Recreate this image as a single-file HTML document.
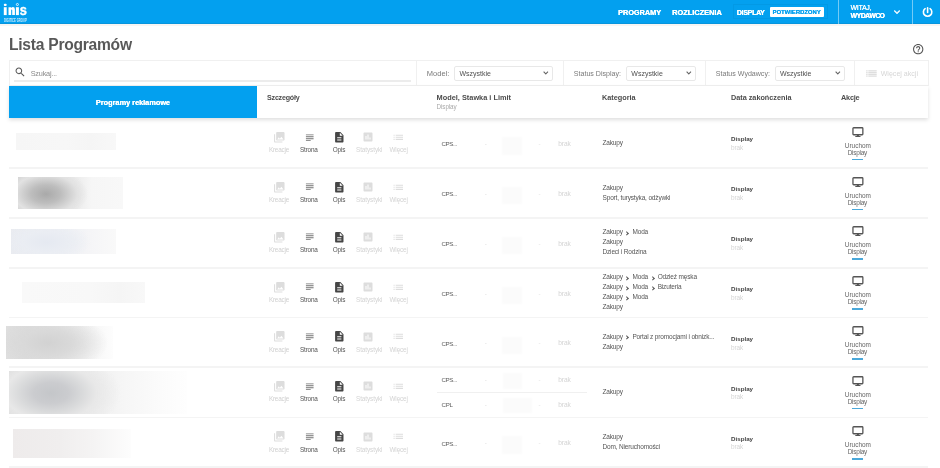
<!DOCTYPE html>
<html><head><meta charset="utf-8"><style>
html,body{margin:0;padding:0;background:#fff;width:940px;height:468px;overflow:hidden;position:relative;font-family:"Liberation Sans", sans-serif}
.t{position:absolute;line-height:1;white-space:nowrap;font-family:"Liberation Sans", sans-serif}
.chev{display:inline-block;width:2.4px;height:2.4px;margin:0 3.6px 0 2.6px;border-right:1.2px solid #555;border-top:1.2px solid #555;transform:rotate(45deg);position:relative;top:0.5px;letter-spacing:0}
</style></head><body><div id="wrap" style="position:absolute;left:0;top:0;width:940px;height:468px;will-change:transform">
<div style="position:absolute;left:0px;top:0px;width:940px;height:24px;background:#03a0ef"></div>
<div style="position:absolute;left:0px;top:23.2px;width:940px;height:1.1px;background:#0794dc"></div>
<div style="position:absolute;left:0px;top:24.3px;width:940px;height:1.6px;background:#f7f5f3"></div>
<svg style="position:absolute;left:0;top:0" width="32" height="24" viewBox="0 0 32 24"><rect x="3.8" y="7.2" width="2.9" height="7.9" fill="#fff"/><rect x="3.8" y="3.8" width="2.9" height="2.2" rx="1" fill="#fff"/><path d="M8.5 15.1V7.2H11.1V8.1Q11.9 7.0 13.0 7.0Q14.9 7.0 14.9 9.4V15.1H12.2V10.3Q12.2 9.5 11.7 9.5Q11.2 9.5 11.2 10.3V15.1Z" fill="#fff"/><rect x="15.9" y="7.2" width="3" height="7.9" fill="#fff"/><circle cx="17.4" cy="4.5" r="1.05" stroke="#fff" stroke-width="0.8" fill="none"/><text x="19.8" y="15.1" font-family="Liberation Sans" font-weight="700" font-size="14.6" fill="#fff" stroke="#fff" stroke-width="0.4" transform="translate(19.8 0) scale(0.88 1) translate(-19.8 0)">s</text></svg>
<div class="t" style="left:3.80px;top:19.11px;font-size:4.6px;font-weight:700;color:rgba(255,255,255,.8);transform:scaleX(0.6);transform-origin:0 0">DIGITICE GROUP</div>
<div class="t" style="left:618.00px;top:8.82px;font-size:7.3px;font-weight:700;color:#fff;text-shadow:0.3px 0 0 #fff">PROGRAMY</div>
<div class="t" style="left:672.00px;top:8.74px;font-size:7.4px;font-weight:700;color:#fff;text-shadow:0.3px 0 0 #fff">ROZLICZENIA</div>
<div style="position:absolute;left:732.7px;top:3.8px;width:95px;height:15px;border:1px solid rgba(0,0,0,.04);box-sizing:border-box"></div>
<div class="t" style="left:736.70px;top:8.97px;font-size:7.0px;font-weight:700;color:#fff;letter-spacing:-0.28px;text-shadow:0.3px 0 0 #fff">DISPLAY</div>
<div style="position:absolute;left:769.7px;top:7.4px;width:54.3px;height:9.5px;background:#fff;border-radius:1px"></div>
<div class="t" style="left:772.50px;top:9.61px;font-size:5.9px;font-weight:700;color:#03a0ef;text-shadow:0.2px 0 0 #03a0ef">POTWIERDZONY</div>
<div style="position:absolute;left:838px;top:0px;width:1px;height:24px;background:rgba(255,255,255,.45)"></div>
<div class="t" style="left:850.60px;top:5.14px;font-size:6.8px;font-weight:400;color:#fff;letter-spacing:-0.2px;text-shadow:0.25px 0 0 #fff">WITAJ,</div>
<div class="t" style="left:850.60px;top:13.44px;font-size:6.8px;font-weight:700;color:#fff;letter-spacing:-0.45px;text-shadow:0.25px 0 0 #fff">WYDAWCO</div>
<svg style="position:absolute;left:891px;top:5.5px;overflow:visible" width="12" height="12" viewBox="0 0 24 24"><path fill="#fff" stroke="#fff" stroke-width="0.8" d="M7.41 8.59L12 13.17l4.59-4.58L18 10l-6 6-6-6 1.41-1.41z"/></svg>
<div style="position:absolute;left:912px;top:0px;width:1px;height:24px;background:rgba(255,255,255,.45)"></div>
<svg style="position:absolute;left:921px;top:6px" width="14" height="14" viewBox="0 0 14 14"><path d="M4.13 2.7A4.2 4.2 0 1 0 9.07 2.7" stroke="#fff" stroke-width="1.6" fill="none" stroke-linecap="round"/><path d="M6.6 1.7V6.4" stroke="#fff" stroke-width="1.6" stroke-linecap="round"/></svg>
<div class="t" style="left:9.00px;top:36.59px;font-size:15.6px;font-weight:700;color:#585858;letter-spacing:-0.25px">Lista Programów</div>
<svg style="position:absolute;left:911.5px;top:43px;overflow:visible" width="12.4" height="12.4" viewBox="0 0 24 24"><path fill="#555" d="M11 18h2v-2h-2v2zm1-16C6.48 2 2 6.48 2 12s4.48 10 10 10 10-4.48 10-10S17.52 2 12 2zm0 18c-4.41 0-8-3.59-8-8s3.590-8 8-8 8 3.590 8 8-3.590 8-8 8zm0-14c-2.210 0-4 1.790-4 4h2c0-1.100.900-2 2-2s2 .900 2 2c0 2-3 1.750-3 5h2c0-2.250 3-2.500 3-5 0-2.210-1.790-4-4-4z"/></svg>
<div style="position:absolute;left:8.5px;top:60px;width:920px;height:26px;background:#fff;border:1px solid #f0f0f0;box-sizing:border-box"></div>
<svg style="position:absolute;left:13.5px;top:65.5px;overflow:visible" width="12.3" height="12.3" viewBox="0 0 24 24"><path fill="#555" d="M15.5 14h-.79l-.28-.27C15.41 12.59 16 11.11 16 9.5 16 5.91 13.09 3 9.5 3S3 5.91 3 9.5 5.91 16 9.5 16c1.610 0 3.090-.590 4.230-1.570l.270.280v.790l5 4.990L20.490 19l-4.990-5zm-6 0C7.010 14 5 11.990 5 9.500S7.010 5 9.500 5 14 7.010 14 9.500 11.990 14 9.500 14z"/></svg>
<div class="t" style="left:30.70px;top:70.32px;font-size:7.3px;font-weight:400;color:#8a8a8a;letter-spacing:-0.2px">Szukaj...</div>
<div style="position:absolute;left:14.2px;top:80.2px;width:397px;height:1.6px;background:#ececec"></div>
<div style="position:absolute;left:416px;top:61px;width:1px;height:24px;background:#f0f0f0"></div>
<div style="position:absolute;left:563px;top:61px;width:1px;height:24px;background:#f0f0f0"></div>
<div style="position:absolute;left:705.2px;top:61px;width:1px;height:24px;background:#f0f0f0"></div>
<div style="position:absolute;left:854.2px;top:61px;width:1px;height:24px;background:#f0f0f0"></div>
<div class="t" style="left:426.80px;top:69.65px;font-size:7.5px;font-weight:400;color:#7a7a7a;">Model:</div>
<div style="position:absolute;left:454.2px;top:65.7px;width:98.80000000000001px;height:15.5px;border:1px solid #e8e8e8;border-radius:2px;box-sizing:border-box;background:#fff"></div>
<div class="t" style="left:459.40px;top:70.07px;font-size:7.0px;font-weight:400;color:#505050;">Wszystkie</div>
<svg style="position:absolute;left:541.0px;top:68.2px;overflow:visible" width="9.6" height="9.6" viewBox="0 0 24 24"><path fill="#555" stroke="#555" stroke-width="0.6" d="M7.41 8.59L12 13.17l4.59-4.58L18 10l-6 6-6-6 1.41-1.41z"/></svg>
<div class="t" style="left:573.80px;top:70.61px;font-size:7.08px;font-weight:400;color:#7a7a7a;">Status Display:</div>
<div style="position:absolute;left:626px;top:65.7px;width:69.60000000000002px;height:15.5px;border:1px solid #e8e8e8;border-radius:2px;box-sizing:border-box;background:#fff"></div>
<div class="t" style="left:631.30px;top:70.07px;font-size:7.0px;font-weight:400;color:#505050;">Wszystkie</div>
<svg style="position:absolute;left:683.6px;top:68.2px;overflow:visible" width="9.6" height="9.6" viewBox="0 0 24 24"><path fill="#555" stroke="#555" stroke-width="0.6" d="M7.41 8.59L12 13.17l4.59-4.58L18 10l-6 6-6-6 1.41-1.41z"/></svg>
<div class="t" style="left:715.80px;top:70.02px;font-size:7.07px;font-weight:400;color:#7a7a7a;">Status Wydawcy:</div>
<div style="position:absolute;left:774.8px;top:65.7px;width:70.0px;height:15.5px;border:1px solid #e8e8e8;border-radius:2px;box-sizing:border-box;background:#fff"></div>
<div class="t" style="left:780.00px;top:70.07px;font-size:7.0px;font-weight:400;color:#505050;">Wszystkie</div>
<svg style="position:absolute;left:832.8px;top:68.2px;overflow:visible" width="9.6" height="9.6" viewBox="0 0 24 24"><path fill="#555" stroke="#555" stroke-width="0.6" d="M7.41 8.59L12 13.17l4.59-4.58L18 10l-6 6-6-6 1.41-1.41z"/></svg>
<svg style="position:absolute;left:865.5px;top:70px" width="11" height="7" viewBox="0 0 11 7"><g fill="#dedede"><rect x="0.2" y="0.2" width="1.4" height="1.3"/><rect x="2.3" y="0.2" width="8.4" height="1.3"/><rect x="0.2" y="1.95" width="1.4" height="1.3"/><rect x="2.3" y="1.95" width="8.4" height="1.3"/><rect x="0.2" y="3.7" width="1.4" height="1.3"/><rect x="2.3" y="3.7" width="8.4" height="1.3"/><rect x="0.2" y="5.45" width="1.4" height="1.3"/><rect x="2.3" y="5.45" width="8.4" height="1.3"/></g></svg>
<div class="t" style="left:880.70px;top:70.02px;font-size:7.07px;font-weight:400;color:#d6d6d6;">Więcej akcji</div>
<div style="position:absolute;left:9px;top:86px;width:919px;height:31.6px;background:#fff;box-shadow:0 1.5px 4px rgba(0,0,0,.13)"></div>
<div style="position:absolute;left:9px;top:86px;width:248px;height:31.6px;background:#03a0ef"></div>
<div class="t" style="left:95.80px;top:98.80px;font-size:7.33px;font-weight:700;color:#fff;text-shadow:0.25px 0 0 #fff">Programy reklamowe</div>
<div class="t" style="left:267.00px;top:94.69px;font-size:7.1px;font-weight:700;color:#4c4c4c;letter-spacing:-0.2px">Szczegóły</div>
<div class="t" style="left:436.60px;top:93.57px;font-size:7.36px;font-weight:700;color:#4c4c4c;">Model, Stawka i Limit</div>
<div class="t" style="left:436.60px;top:104.27px;font-size:6.3px;font-weight:400;color:#aaa;letter-spacing:-0.1px">Display</div>
<div class="t" style="left:602.00px;top:93.82px;font-size:7.3px;font-weight:700;color:#4c4c4c;">Kategoria</div>
<div class="t" style="left:731.00px;top:93.86px;font-size:7.25px;font-weight:700;color:#4c4c4c;">Data zakończenia</div>
<div class="t" style="left:841.00px;top:94.42px;font-size:7.3px;font-weight:700;color:#4c4c4c;letter-spacing:-0.2px">Akcje</div>
<div style="position:absolute;left:8.5px;top:167.1px;width:919.5px;height:1.7px;background:#f4f4f4"></div>
<div style="position:absolute;left:16.4px;top:133.2px;width:99.8px;height:17.1px;background:linear-gradient(90deg,#f6f6f6,#f7f7f7 50%,#f5f5f5 75%,#f8f8f8);filter:blur(0.5px)"></div>
<svg style="position:absolute;left:272.5px;top:130.79999999999998px;overflow:visible" width="12.6" height="12.6" viewBox="0 0 24 24"><path fill="#ddd" d="M22 16V4c0-1.1-.9-2-2-2H8c-1.1 0-2 .9-2 2v12c0 1.1.9 2 2 2h12c1.1 0 2-.9 2-2zm-11-4l2.03 2.71L16 11l4 5H8l3-4zM2 6v14c0 1.1.9 2 2 2h14v-2H4V6H2z"/></svg>
<div class="t" style="left:268.90px;top:147.18px;font-size:6.4px;font-weight:400;color:#d0d0d0;letter-spacing:-0.22px">Kreacje</div>
<svg style="position:absolute;left:303.6px;top:131.49999999999997px;overflow:visible" width="11.5" height="11.5" viewBox="0 0 24 24"><path fill="#707070" d="M14 17H4v2h10v-2zm6-8H4v2h16V9zM4 15h16v-2H4v2zM4 5v2h16V5H4z"/></svg>
<div class="t" style="left:300.00px;top:147.18px;font-size:6.4px;font-weight:400;color:#555;letter-spacing:-0.19px">Strona</div>
<svg style="position:absolute;left:332.5px;top:130.79999999999998px;overflow:visible" width="12.6" height="12.6" viewBox="0 0 24 24"><path fill="#454545" d="M14 2H6c-1.1 0-1.99.9-1.99 2L4 20c0 1.1.89 2 1.99 2H18c1.1 0 2-.9 2-2V8l-6-6zm2 16H8v-2h8v2zm0-4H8v-2h8v2zm-3-5V3.5L18.5 9H13z"/></svg>
<div class="t" style="left:332.70px;top:147.18px;font-size:6.4px;font-weight:400;color:#555;letter-spacing:-0.15px">Opis</div>
<svg style="position:absolute;left:362.3px;top:131.1px;overflow:visible" width="12.0" height="12.0" viewBox="0 0 24 24"><path fill="#ddd" d="M19 3H5c-1.1 0-2 .9-2 2v14c0 1.1.9 2 2 2h14c1.1 0 2-.9 2-2V5c0-1.1-.9-2-2-2zM9 17H7v-7h2v7zm4 0h-2V7h2v10zm4 0h-2v-4h2v4z"/></svg>
<div class="t" style="left:356.00px;top:147.18px;font-size:6.4px;font-weight:400;color:#d4d4d4;letter-spacing:-0.09px">Statystyki</div>
<svg style="position:absolute;left:392px;top:130.79999999999998px;overflow:visible" width="12.6" height="12.6" viewBox="0 0 24 24"><path fill="#ddd" d="M3 13h2v-2H3v2zm0 4h2v-2H3v2zm0-8h2V7H3v2zm4 4h14v-2H7v2zm0 4h14v-2H7v2zM7 7v2h14V7H7z"/></svg>
<div class="t" style="left:389.50px;top:147.18px;font-size:6.4px;font-weight:400;color:#d4d4d4;letter-spacing:-0.16px">Więcej</div>
<div class="t" style="left:441.60px;top:141.30px;font-size:6.2px;font-weight:400;color:#606060;letter-spacing:-0.45px">CPS...</div>
<div class="t" style="left:484.80px;top:141.00px;font-size:6.2px;font-weight:400;color:#ddd;">-</div>
<div style="position:absolute;left:501.5px;top:137.25px;width:20px;height:17.3px;background:#fbfbfb;filter:blur(1px)"></div>
<div class="t" style="left:538.50px;top:141.00px;font-size:6.2px;font-weight:400;color:#ddd;">-</div>
<div class="t" style="left:558.30px;top:140.96px;font-size:6.6px;font-weight:400;color:#d4d4d4;letter-spacing:-0.1px">brak</div>
<div class="t" style="left:602.50px;top:139.70px;font-size:6.5px;font-weight:400;color:#555;letter-spacing:-0.16px">Zakupy</div>
<div class="t" style="left:731.00px;top:136.30px;font-size:6.2px;font-weight:700;color:#444;">Display</div>
<div class="t" style="left:731.00px;top:145.13px;font-size:6.4px;font-weight:400;color:#d4d4d4;letter-spacing:-0.1px">brak</div>
<svg style="position:absolute;left:851.6px;top:126.70px" width="12" height="11" viewBox="0 0 12 11"><rect x="0.95" y="0.75" width="9.9" height="7.0" rx="0.7" stroke="#555" stroke-width="1.3" fill="none"/><path d="M4.9 7.6h2v1.3h1.6v1H3.3v-1h1.6z" fill="#555"/></svg>
<div class="t" style="left:844.80px;top:142.74px;font-size:6.45px;font-weight:400;color:#666;">Uruchom</div>
<div class="t" style="left:847.70px;top:149.74px;font-size:6.45px;font-weight:400;color:#666;letter-spacing:-0.25px">Display</div>
<div style="position:absolute;left:852.3px;top:158.7px;width:10.3px;height:1.5px;background:#4aa8da"></div>
<div style="position:absolute;left:8.5px;top:216.9px;width:919.5px;height:1.7px;background:#f4f4f4"></div>
<div style="position:absolute;left:17.9px;top:176.7px;width:105.1px;height:32.8px;background:radial-gradient(ellipse 42px 26px at 28px 17px,#a9a9a9 0%,#bdbdbd 35%,#e2e2e2 75%,rgba(245,245,245,0) 100%),linear-gradient(90deg,#d0d0d0,#e8e8e8 50%,#f6f6f6 70%,#f8f8f8);filter:blur(0.5px)"></div>
<svg style="position:absolute;left:272.5px;top:180.7px;overflow:visible" width="12.6" height="12.6" viewBox="0 0 24 24"><path fill="#ddd" d="M22 16V4c0-1.1-.9-2-2-2H8c-1.1 0-2 .9-2 2v12c0 1.1.9 2 2 2h12c1.1 0 2-.9 2-2zm-11-4l2.03 2.71L16 11l4 5H8l3-4zM2 6v14c0 1.1.9 2 2 2h14v-2H4V6H2z"/></svg>
<div class="t" style="left:268.90px;top:197.08px;font-size:6.4px;font-weight:400;color:#d0d0d0;letter-spacing:-0.22px">Kreacje</div>
<svg style="position:absolute;left:303.6px;top:181.39999999999998px;overflow:visible" width="11.5" height="11.5" viewBox="0 0 24 24"><path fill="#707070" d="M14 17H4v2h10v-2zm6-8H4v2h16V9zM4 15h16v-2H4v2zM4 5v2h16V5H4z"/></svg>
<div class="t" style="left:300.00px;top:197.08px;font-size:6.4px;font-weight:400;color:#555;letter-spacing:-0.19px">Strona</div>
<svg style="position:absolute;left:332.5px;top:180.7px;overflow:visible" width="12.6" height="12.6" viewBox="0 0 24 24"><path fill="#454545" d="M14 2H6c-1.1 0-1.99.9-1.99 2L4 20c0 1.1.89 2 1.99 2H18c1.1 0 2-.9 2-2V8l-6-6zm2 16H8v-2h8v2zm0-4H8v-2h8v2zm-3-5V3.5L18.5 9H13z"/></svg>
<div class="t" style="left:332.70px;top:197.08px;font-size:6.4px;font-weight:400;color:#555;letter-spacing:-0.15px">Opis</div>
<svg style="position:absolute;left:362.3px;top:181.0px;overflow:visible" width="12.0" height="12.0" viewBox="0 0 24 24"><path fill="#ddd" d="M19 3H5c-1.1 0-2 .9-2 2v14c0 1.1.9 2 2 2h14c1.1 0 2-.9 2-2V5c0-1.1-.9-2-2-2zM9 17H7v-7h2v7zm4 0h-2V7h2v10zm4 0h-2v-4h2v4z"/></svg>
<div class="t" style="left:356.00px;top:197.08px;font-size:6.4px;font-weight:400;color:#d4d4d4;letter-spacing:-0.09px">Statystyki</div>
<svg style="position:absolute;left:392px;top:180.7px;overflow:visible" width="12.6" height="12.6" viewBox="0 0 24 24"><path fill="#ddd" d="M3 13h2v-2H3v2zm0 4h2v-2H3v2zm0-8h2V7H3v2zm4 4h14v-2H7v2zm0 4h14v-2H7v2zM7 7v2h14V7H7z"/></svg>
<div class="t" style="left:389.50px;top:197.08px;font-size:6.4px;font-weight:400;color:#d4d4d4;letter-spacing:-0.16px">Więcej</div>
<div class="t" style="left:441.60px;top:191.15px;font-size:6.2px;font-weight:400;color:#606060;letter-spacing:-0.45px">CPS...</div>
<div class="t" style="left:484.80px;top:190.85px;font-size:6.2px;font-weight:400;color:#ddd;">-</div>
<div style="position:absolute;left:501.5px;top:187.1px;width:20px;height:17.3px;background:#fbfbfb;filter:blur(1px)"></div>
<div class="t" style="left:538.50px;top:190.85px;font-size:6.2px;font-weight:400;color:#ddd;">-</div>
<div class="t" style="left:558.30px;top:190.81px;font-size:6.6px;font-weight:400;color:#d4d4d4;letter-spacing:-0.1px">brak</div>
<div class="t" style="left:602.50px;top:184.55px;font-size:6.5px;font-weight:400;color:#555;letter-spacing:-0.16px">Zakupy</div>
<div class="t" style="left:602.50px;top:194.55px;font-size:6.5px;font-weight:400;color:#555;letter-spacing:-0.16px">Sport, turystyka, odżywki</div>
<div class="t" style="left:731.00px;top:186.15px;font-size:6.2px;font-weight:700;color:#444;">Display</div>
<div class="t" style="left:731.00px;top:194.98px;font-size:6.4px;font-weight:400;color:#d4d4d4;letter-spacing:-0.1px">brak</div>
<svg style="position:absolute;left:851.6px;top:176.60px" width="12" height="11" viewBox="0 0 12 11"><rect x="0.95" y="0.75" width="9.9" height="7.0" rx="0.7" stroke="#555" stroke-width="1.3" fill="none"/><path d="M4.9 7.6h2v1.3h1.6v1H3.3v-1h1.6z" fill="#555"/></svg>
<div class="t" style="left:844.80px;top:192.64px;font-size:6.45px;font-weight:400;color:#666;">Uruchom</div>
<div class="t" style="left:847.70px;top:199.64px;font-size:6.45px;font-weight:400;color:#666;letter-spacing:-0.25px">Display</div>
<div style="position:absolute;left:852.3px;top:208.6px;width:10.3px;height:1.5px;background:#4aa8da"></div>
<div style="position:absolute;left:8.5px;top:266.90000000000003px;width:919.5px;height:1.7px;background:#f4f4f4"></div>
<div style="position:absolute;left:10.7px;top:228.7px;width:105.5px;height:25.3px;background:radial-gradient(ellipse 45px 20px at 35px 13px,#e5e9f1 0%,#eaedf3 50%,rgba(244,245,248,0) 100%),linear-gradient(90deg,#e9ebf0,#eef0f4 50%,#f5f5f7 75%,#f9f9f9);filter:blur(0.5px)"></div>
<svg style="position:absolute;left:272.5px;top:230.5px;overflow:visible" width="12.6" height="12.6" viewBox="0 0 24 24"><path fill="#ddd" d="M22 16V4c0-1.1-.9-2-2-2H8c-1.1 0-2 .9-2 2v12c0 1.1.9 2 2 2h12c1.1 0 2-.9 2-2zm-11-4l2.03 2.71L16 11l4 5H8l3-4zM2 6v14c0 1.1.9 2 2 2h14v-2H4V6H2z"/></svg>
<div class="t" style="left:268.90px;top:246.88px;font-size:6.4px;font-weight:400;color:#d0d0d0;letter-spacing:-0.22px">Kreacje</div>
<svg style="position:absolute;left:303.6px;top:231.2px;overflow:visible" width="11.5" height="11.5" viewBox="0 0 24 24"><path fill="#707070" d="M14 17H4v2h10v-2zm6-8H4v2h16V9zM4 15h16v-2H4v2zM4 5v2h16V5H4z"/></svg>
<div class="t" style="left:300.00px;top:246.88px;font-size:6.4px;font-weight:400;color:#555;letter-spacing:-0.19px">Strona</div>
<svg style="position:absolute;left:332.5px;top:230.5px;overflow:visible" width="12.6" height="12.6" viewBox="0 0 24 24"><path fill="#454545" d="M14 2H6c-1.1 0-1.99.9-1.99 2L4 20c0 1.1.89 2 1.99 2H18c1.1 0 2-.9 2-2V8l-6-6zm2 16H8v-2h8v2zm0-4H8v-2h8v2zm-3-5V3.5L18.5 9H13z"/></svg>
<div class="t" style="left:332.70px;top:246.88px;font-size:6.4px;font-weight:400;color:#555;letter-spacing:-0.15px">Opis</div>
<svg style="position:absolute;left:362.3px;top:230.8px;overflow:visible" width="12.0" height="12.0" viewBox="0 0 24 24"><path fill="#ddd" d="M19 3H5c-1.1 0-2 .9-2 2v14c0 1.1.9 2 2 2h14c1.1 0 2-.9 2-2V5c0-1.1-.9-2-2-2zM9 17H7v-7h2v7zm4 0h-2V7h2v10zm4 0h-2v-4h2v4z"/></svg>
<div class="t" style="left:356.00px;top:246.88px;font-size:6.4px;font-weight:400;color:#d4d4d4;letter-spacing:-0.09px">Statystyki</div>
<svg style="position:absolute;left:392px;top:230.5px;overflow:visible" width="12.6" height="12.6" viewBox="0 0 24 24"><path fill="#ddd" d="M3 13h2v-2H3v2zm0 4h2v-2H3v2zm0-8h2V7H3v2zm4 4h14v-2H7v2zm0 4h14v-2H7v2zM7 7v2h14V7H7z"/></svg>
<div class="t" style="left:389.50px;top:246.88px;font-size:6.4px;font-weight:400;color:#d4d4d4;letter-spacing:-0.16px">Więcej</div>
<div class="t" style="left:441.60px;top:241.05px;font-size:6.2px;font-weight:400;color:#606060;letter-spacing:-0.45px">CPS...</div>
<div class="t" style="left:484.80px;top:240.75px;font-size:6.2px;font-weight:400;color:#ddd;">-</div>
<div style="position:absolute;left:501.5px;top:237.0px;width:20px;height:17.3px;background:#fbfbfb;filter:blur(1px)"></div>
<div class="t" style="left:538.50px;top:240.75px;font-size:6.2px;font-weight:400;color:#ddd;">-</div>
<div class="t" style="left:558.30px;top:240.71px;font-size:6.6px;font-weight:400;color:#d4d4d4;letter-spacing:-0.1px">brak</div>
<div class="t" style="left:602.50px;top:229.45px;font-size:6.5px;font-weight:400;color:#555;letter-spacing:-0.16px">Zakupy<span class="chev"></span>Moda</div>
<div class="t" style="left:602.50px;top:239.45px;font-size:6.5px;font-weight:400;color:#555;letter-spacing:-0.16px">Zakupy</div>
<div class="t" style="left:602.50px;top:249.45px;font-size:6.5px;font-weight:400;color:#555;letter-spacing:-0.16px">Dzieci i Rodzina</div>
<div class="t" style="left:731.00px;top:236.05px;font-size:6.2px;font-weight:700;color:#444;">Display</div>
<div class="t" style="left:731.00px;top:244.88px;font-size:6.4px;font-weight:400;color:#d4d4d4;letter-spacing:-0.1px">brak</div>
<svg style="position:absolute;left:851.6px;top:226.40px" width="12" height="11" viewBox="0 0 12 11"><rect x="0.95" y="0.75" width="9.9" height="7.0" rx="0.7" stroke="#555" stroke-width="1.3" fill="none"/><path d="M4.9 7.6h2v1.3h1.6v1H3.3v-1h1.6z" fill="#555"/></svg>
<div class="t" style="left:844.80px;top:242.44px;font-size:6.45px;font-weight:400;color:#666;">Uruchom</div>
<div class="t" style="left:847.70px;top:249.44px;font-size:6.45px;font-weight:400;color:#666;letter-spacing:-0.25px">Display</div>
<div style="position:absolute;left:852.3px;top:258.40000000000003px;width:10.3px;height:1.5px;background:#4aa8da"></div>
<div style="position:absolute;left:8.5px;top:316.8px;width:919.5px;height:1.7px;background:#f4f4f4"></div>
<div style="position:absolute;left:22.1px;top:282.2px;width:123.4px;height:20.4px;background:linear-gradient(90deg,#f9f9f9,#f8f8f8 55%,#f5f5f5 80%,#f8f8f8);filter:blur(0.5px)"></div>
<svg style="position:absolute;left:272.5px;top:280.5px;overflow:visible" width="12.6" height="12.6" viewBox="0 0 24 24"><path fill="#ddd" d="M22 16V4c0-1.1-.9-2-2-2H8c-1.1 0-2 .9-2 2v12c0 1.1.9 2 2 2h12c1.1 0 2-.9 2-2zm-11-4l2.03 2.71L16 11l4 5H8l3-4zM2 6v14c0 1.1.9 2 2 2h14v-2H4V6H2z"/></svg>
<div class="t" style="left:268.90px;top:296.88px;font-size:6.4px;font-weight:400;color:#d0d0d0;letter-spacing:-0.22px">Kreacje</div>
<svg style="position:absolute;left:303.6px;top:281.2px;overflow:visible" width="11.5" height="11.5" viewBox="0 0 24 24"><path fill="#707070" d="M14 17H4v2h10v-2zm6-8H4v2h16V9zM4 15h16v-2H4v2zM4 5v2h16V5H4z"/></svg>
<div class="t" style="left:300.00px;top:296.88px;font-size:6.4px;font-weight:400;color:#555;letter-spacing:-0.19px">Strona</div>
<svg style="position:absolute;left:332.5px;top:280.5px;overflow:visible" width="12.6" height="12.6" viewBox="0 0 24 24"><path fill="#454545" d="M14 2H6c-1.1 0-1.99.9-1.99 2L4 20c0 1.1.89 2 1.99 2H18c1.1 0 2-.9 2-2V8l-6-6zm2 16H8v-2h8v2zm0-4H8v-2h8v2zm-3-5V3.5L18.5 9H13z"/></svg>
<div class="t" style="left:332.70px;top:296.88px;font-size:6.4px;font-weight:400;color:#555;letter-spacing:-0.15px">Opis</div>
<svg style="position:absolute;left:362.3px;top:280.8px;overflow:visible" width="12.0" height="12.0" viewBox="0 0 24 24"><path fill="#ddd" d="M19 3H5c-1.1 0-2 .9-2 2v14c0 1.1.9 2 2 2h14c1.1 0 2-.9 2-2V5c0-1.1-.9-2-2-2zM9 17H7v-7h2v7zm4 0h-2V7h2v10zm4 0h-2v-4h2v4z"/></svg>
<div class="t" style="left:356.00px;top:296.88px;font-size:6.4px;font-weight:400;color:#d4d4d4;letter-spacing:-0.09px">Statystyki</div>
<svg style="position:absolute;left:392px;top:280.5px;overflow:visible" width="12.6" height="12.6" viewBox="0 0 24 24"><path fill="#ddd" d="M3 13h2v-2H3v2zm0 4h2v-2H3v2zm0-8h2V7H3v2zm4 4h14v-2H7v2zm0 4h14v-2H7v2zM7 7v2h14V7H7z"/></svg>
<div class="t" style="left:389.50px;top:296.88px;font-size:6.4px;font-weight:400;color:#d4d4d4;letter-spacing:-0.16px">Więcej</div>
<div class="t" style="left:441.60px;top:291.00px;font-size:6.2px;font-weight:400;color:#606060;letter-spacing:-0.45px">CPS...</div>
<div class="t" style="left:484.80px;top:290.70px;font-size:6.2px;font-weight:400;color:#ddd;">-</div>
<div style="position:absolute;left:501.5px;top:286.95px;width:20px;height:17.3px;background:#fbfbfb;filter:blur(1px)"></div>
<div class="t" style="left:538.50px;top:290.70px;font-size:6.2px;font-weight:400;color:#ddd;">-</div>
<div class="t" style="left:558.30px;top:290.66px;font-size:6.6px;font-weight:400;color:#d4d4d4;letter-spacing:-0.1px">brak</div>
<div class="t" style="left:602.50px;top:274.40px;font-size:6.5px;font-weight:400;color:#555;letter-spacing:-0.16px">Zakupy<span class="chev"></span>Moda<span class="chev"></span>Odzież męska</div>
<div class="t" style="left:602.50px;top:284.40px;font-size:6.5px;font-weight:400;color:#555;letter-spacing:-0.16px">Zakupy<span class="chev"></span>Moda<span class="chev"></span>Bizuteria</div>
<div class="t" style="left:602.50px;top:294.40px;font-size:6.5px;font-weight:400;color:#555;letter-spacing:-0.16px">Zakupy<span class="chev"></span>Moda</div>
<div class="t" style="left:602.50px;top:304.40px;font-size:6.5px;font-weight:400;color:#555;letter-spacing:-0.16px">Zakupy</div>
<div class="t" style="left:731.00px;top:286.00px;font-size:6.2px;font-weight:700;color:#444;">Display</div>
<div class="t" style="left:731.00px;top:294.83px;font-size:6.4px;font-weight:400;color:#d4d4d4;letter-spacing:-0.1px">brak</div>
<svg style="position:absolute;left:851.6px;top:276.40px" width="12" height="11" viewBox="0 0 12 11"><rect x="0.95" y="0.75" width="9.9" height="7.0" rx="0.7" stroke="#555" stroke-width="1.3" fill="none"/><path d="M4.9 7.6h2v1.3h1.6v1H3.3v-1h1.6z" fill="#555"/></svg>
<div class="t" style="left:844.80px;top:292.44px;font-size:6.45px;font-weight:400;color:#666;">Uruchom</div>
<div class="t" style="left:847.70px;top:299.44px;font-size:6.45px;font-weight:400;color:#666;letter-spacing:-0.25px">Display</div>
<div style="position:absolute;left:852.3px;top:308.40000000000003px;width:10.3px;height:1.5px;background:#4aa8da"></div>
<div style="position:absolute;left:8.5px;top:366.3px;width:919.5px;height:1.7px;background:#f4f4f4"></div>
<div style="position:absolute;left:5.7px;top:325.5px;width:107.6px;height:33.5px;background:radial-gradient(ellipse 60px 30px at 42px 17px,#d2d2d2 0%,#d9d9d9 40%,rgba(230,230,230,0) 100%),linear-gradient(90deg,#e0e0e0,#dcdcdc 20%,#e2e2e2 40%,#ededed 60%,#f7f7f7 82%,#fdfdfd);filter:blur(0.5px)"></div>
<svg style="position:absolute;left:272.5px;top:330.4px;overflow:visible" width="12.6" height="12.6" viewBox="0 0 24 24"><path fill="#ddd" d="M22 16V4c0-1.1-.9-2-2-2H8c-1.1 0-2 .9-2 2v12c0 1.1.9 2 2 2h12c1.1 0 2-.9 2-2zm-11-4l2.03 2.71L16 11l4 5H8l3-4zM2 6v14c0 1.1.9 2 2 2h14v-2H4V6H2z"/></svg>
<div class="t" style="left:268.90px;top:346.78px;font-size:6.4px;font-weight:400;color:#d0d0d0;letter-spacing:-0.22px">Kreacje</div>
<svg style="position:absolute;left:303.6px;top:331.09999999999997px;overflow:visible" width="11.5" height="11.5" viewBox="0 0 24 24"><path fill="#707070" d="M14 17H4v2h10v-2zm6-8H4v2h16V9zM4 15h16v-2H4v2zM4 5v2h16V5H4z"/></svg>
<div class="t" style="left:300.00px;top:346.78px;font-size:6.4px;font-weight:400;color:#555;letter-spacing:-0.19px">Strona</div>
<svg style="position:absolute;left:332.5px;top:330.4px;overflow:visible" width="12.6" height="12.6" viewBox="0 0 24 24"><path fill="#454545" d="M14 2H6c-1.1 0-1.99.9-1.99 2L4 20c0 1.1.89 2 1.99 2H18c1.1 0 2-.9 2-2V8l-6-6zm2 16H8v-2h8v2zm0-4H8v-2h8v2zm-3-5V3.5L18.5 9H13z"/></svg>
<div class="t" style="left:332.70px;top:346.78px;font-size:6.4px;font-weight:400;color:#555;letter-spacing:-0.15px">Opis</div>
<svg style="position:absolute;left:362.3px;top:330.7px;overflow:visible" width="12.0" height="12.0" viewBox="0 0 24 24"><path fill="#ddd" d="M19 3H5c-1.1 0-2 .9-2 2v14c0 1.1.9 2 2 2h14c1.1 0 2-.9 2-2V5c0-1.1-.9-2-2-2zM9 17H7v-7h2v7zm4 0h-2V7h2v10zm4 0h-2v-4h2v4z"/></svg>
<div class="t" style="left:356.00px;top:346.78px;font-size:6.4px;font-weight:400;color:#d4d4d4;letter-spacing:-0.09px">Statystyki</div>
<svg style="position:absolute;left:392px;top:330.4px;overflow:visible" width="12.6" height="12.6" viewBox="0 0 24 24"><path fill="#ddd" d="M3 13h2v-2H3v2zm0 4h2v-2H3v2zm0-8h2V7H3v2zm4 4h14v-2H7v2zm0 4h14v-2H7v2zM7 7v2h14V7H7z"/></svg>
<div class="t" style="left:389.50px;top:346.78px;font-size:6.4px;font-weight:400;color:#d4d4d4;letter-spacing:-0.16px">Więcej</div>
<div class="t" style="left:441.60px;top:340.70px;font-size:6.2px;font-weight:400;color:#606060;letter-spacing:-0.45px">CPS...</div>
<div class="t" style="left:484.80px;top:340.40px;font-size:6.2px;font-weight:400;color:#ddd;">-</div>
<div style="position:absolute;left:501.5px;top:336.65px;width:20px;height:17.3px;background:#fbfbfb;filter:blur(1px)"></div>
<div class="t" style="left:538.50px;top:340.40px;font-size:6.2px;font-weight:400;color:#ddd;">-</div>
<div class="t" style="left:558.30px;top:340.36px;font-size:6.6px;font-weight:400;color:#d4d4d4;letter-spacing:-0.1px">brak</div>
<div class="t" style="left:602.50px;top:334.10px;font-size:6.5px;font-weight:400;color:#555;letter-spacing:-0.16px">Zakupy<span class="chev"></span>Portal z promocjami i obnizk...</div>
<div class="t" style="left:602.50px;top:344.10px;font-size:6.5px;font-weight:400;color:#555;letter-spacing:-0.16px">Zakupy</div>
<div class="t" style="left:731.00px;top:335.70px;font-size:6.2px;font-weight:700;color:#444;">Display</div>
<div class="t" style="left:731.00px;top:344.53px;font-size:6.4px;font-weight:400;color:#d4d4d4;letter-spacing:-0.1px">brak</div>
<svg style="position:absolute;left:851.6px;top:326.30px" width="12" height="11" viewBox="0 0 12 11"><rect x="0.95" y="0.75" width="9.9" height="7.0" rx="0.7" stroke="#555" stroke-width="1.3" fill="none"/><path d="M4.9 7.6h2v1.3h1.6v1H3.3v-1h1.6z" fill="#555"/></svg>
<div class="t" style="left:844.80px;top:342.34px;font-size:6.45px;font-weight:400;color:#666;">Uruchom</div>
<div class="t" style="left:847.70px;top:349.34px;font-size:6.45px;font-weight:400;color:#666;letter-spacing:-0.25px">Display</div>
<div style="position:absolute;left:852.3px;top:358.3px;width:10.3px;height:1.5px;background:#4aa8da"></div>
<div style="position:absolute;left:8.5px;top:416.6px;width:919.5px;height:1.7px;background:#f4f4f4"></div>
<div style="position:absolute;left:8.9px;top:370.7px;width:178.1px;height:43.8px;background:radial-gradient(ellipse 70px 42px at 42px 22px,#c4c6c9 0%,#cbcccf 25%,#d9dadb 45%,#e8e8e8 65%,rgba(240,240,240,0) 100%),linear-gradient(90deg,#d6d6d6,#e4e4e4 25%,#efefef 45%,#f6f6f6 65%,#fbfbfb 85%,#fefefe);filter:blur(0.5px)"></div>
<svg style="position:absolute;left:272.5px;top:379.9px;overflow:visible" width="12.6" height="12.6" viewBox="0 0 24 24"><path fill="#ddd" d="M22 16V4c0-1.1-.9-2-2-2H8c-1.1 0-2 .9-2 2v12c0 1.1.9 2 2 2h12c1.1 0 2-.9 2-2zm-11-4l2.03 2.71L16 11l4 5H8l3-4zM2 6v14c0 1.1.9 2 2 2h14v-2H4V6H2z"/></svg>
<div class="t" style="left:268.90px;top:396.28px;font-size:6.4px;font-weight:400;color:#d0d0d0;letter-spacing:-0.22px">Kreacje</div>
<svg style="position:absolute;left:303.6px;top:380.59999999999997px;overflow:visible" width="11.5" height="11.5" viewBox="0 0 24 24"><path fill="#707070" d="M14 17H4v2h10v-2zm6-8H4v2h16V9zM4 15h16v-2H4v2zM4 5v2h16V5H4z"/></svg>
<div class="t" style="left:300.00px;top:396.28px;font-size:6.4px;font-weight:400;color:#555;letter-spacing:-0.19px">Strona</div>
<svg style="position:absolute;left:332.5px;top:379.9px;overflow:visible" width="12.6" height="12.6" viewBox="0 0 24 24"><path fill="#454545" d="M14 2H6c-1.1 0-1.99.9-1.99 2L4 20c0 1.1.89 2 1.99 2H18c1.1 0 2-.9 2-2V8l-6-6zm2 16H8v-2h8v2zm0-4H8v-2h8v2zm-3-5V3.5L18.5 9H13z"/></svg>
<div class="t" style="left:332.70px;top:396.28px;font-size:6.4px;font-weight:400;color:#555;letter-spacing:-0.15px">Opis</div>
<svg style="position:absolute;left:362.3px;top:380.2px;overflow:visible" width="12.0" height="12.0" viewBox="0 0 24 24"><path fill="#ddd" d="M19 3H5c-1.1 0-2 .9-2 2v14c0 1.1.9 2 2 2h14c1.1 0 2-.9 2-2V5c0-1.1-.9-2-2-2zM9 17H7v-7h2v7zm4 0h-2V7h2v10zm4 0h-2v-4h2v4z"/></svg>
<div class="t" style="left:356.00px;top:396.28px;font-size:6.4px;font-weight:400;color:#d4d4d4;letter-spacing:-0.09px">Statystyki</div>
<svg style="position:absolute;left:392px;top:379.9px;overflow:visible" width="12.6" height="12.6" viewBox="0 0 24 24"><path fill="#ddd" d="M3 13h2v-2H3v2zm0 4h2v-2H3v2zm0-8h2V7H3v2zm4 4h14v-2H7v2zm0 4h14v-2H7v2zM7 7v2h14V7H7z"/></svg>
<div class="t" style="left:389.50px;top:396.28px;font-size:6.4px;font-weight:400;color:#d4d4d4;letter-spacing:-0.16px">Więcej</div>
<div class="t" style="left:441.60px;top:377.35px;font-size:6.2px;font-weight:400;color:#606060;letter-spacing:-0.45px">CPS...</div>
<div class="t" style="left:484.80px;top:377.05px;font-size:6.2px;font-weight:400;color:#ddd;">-</div>
<div style="position:absolute;left:502.5px;top:373.29999999999995px;width:19px;height:15.5px;background:#fbfbfb;filter:blur(1px)"></div>
<div class="t" style="left:538.50px;top:377.05px;font-size:6.2px;font-weight:400;color:#ddd;">-</div>
<div class="t" style="left:558.30px;top:377.01px;font-size:6.6px;font-weight:400;color:#d4d4d4;letter-spacing:-0.1px">brak</div>
<div class="t" style="left:441.60px;top:401.95px;font-size:6.2px;font-weight:400;color:#606060;letter-spacing:-0.35px">CPL</div>
<div class="t" style="left:484.80px;top:401.65px;font-size:6.2px;font-weight:400;color:#ddd;">-</div>
<div style="position:absolute;left:502.5px;top:397.9px;width:29px;height:15.5px;background:#fbfbfb;filter:blur(1px)"></div>
<div class="t" style="left:538.50px;top:401.65px;font-size:6.2px;font-weight:400;color:#ddd;">-</div>
<div class="t" style="left:558.30px;top:401.61px;font-size:6.6px;font-weight:400;color:#d4d4d4;letter-spacing:-0.1px">brak</div>
<div style="position:absolute;left:437.2px;top:392.0px;width:150px;height:1px;background:#f0f0f0"></div>
<div class="t" style="left:602.50px;top:389.00px;font-size:6.5px;font-weight:400;color:#555;letter-spacing:-0.16px">Zakupy</div>
<div class="t" style="left:731.00px;top:385.60px;font-size:6.2px;font-weight:700;color:#444;">Display</div>
<div class="t" style="left:731.00px;top:394.43px;font-size:6.4px;font-weight:400;color:#d4d4d4;letter-spacing:-0.1px">brak</div>
<svg style="position:absolute;left:851.6px;top:375.80px" width="12" height="11" viewBox="0 0 12 11"><rect x="0.95" y="0.75" width="9.9" height="7.0" rx="0.7" stroke="#555" stroke-width="1.3" fill="none"/><path d="M4.9 7.6h2v1.3h1.6v1H3.3v-1h1.6z" fill="#555"/></svg>
<div class="t" style="left:844.80px;top:391.84px;font-size:6.45px;font-weight:400;color:#666;">Uruchom</div>
<div class="t" style="left:847.70px;top:398.84px;font-size:6.45px;font-weight:400;color:#666;letter-spacing:-0.25px">Display</div>
<div style="position:absolute;left:852.3px;top:407.8px;width:10.3px;height:1.5px;background:#4aa8da"></div>
<div style="position:absolute;left:8.5px;top:466.1px;width:919.5px;height:1.7px;background:#f4f4f4"></div>
<div style="position:absolute;left:12.8px;top:428.8px;width:118px;height:29.5px;background:linear-gradient(90deg,#eeebeb,#f0eeee 40%,#f5f4f4 70%,#fdfdfd);filter:blur(0.5px)"></div>
<svg style="position:absolute;left:272.5px;top:430.2px;overflow:visible" width="12.6" height="12.6" viewBox="0 0 24 24"><path fill="#ddd" d="M22 16V4c0-1.1-.9-2-2-2H8c-1.1 0-2 .9-2 2v12c0 1.1.9 2 2 2h12c1.1 0 2-.9 2-2zm-11-4l2.03 2.71L16 11l4 5H8l3-4zM2 6v14c0 1.1.9 2 2 2h14v-2H4V6H2z"/></svg>
<div class="t" style="left:268.90px;top:446.58px;font-size:6.4px;font-weight:400;color:#d0d0d0;letter-spacing:-0.22px">Kreacje</div>
<svg style="position:absolute;left:303.6px;top:430.9px;overflow:visible" width="11.5" height="11.5" viewBox="0 0 24 24"><path fill="#707070" d="M14 17H4v2h10v-2zm6-8H4v2h16V9zM4 15h16v-2H4v2zM4 5v2h16V5H4z"/></svg>
<div class="t" style="left:300.00px;top:446.58px;font-size:6.4px;font-weight:400;color:#555;letter-spacing:-0.19px">Strona</div>
<svg style="position:absolute;left:332.5px;top:430.2px;overflow:visible" width="12.6" height="12.6" viewBox="0 0 24 24"><path fill="#454545" d="M14 2H6c-1.1 0-1.99.9-1.99 2L4 20c0 1.1.89 2 1.99 2H18c1.1 0 2-.9 2-2V8l-6-6zm2 16H8v-2h8v2zm0-4H8v-2h8v2zm-3-5V3.5L18.5 9H13z"/></svg>
<div class="t" style="left:332.70px;top:446.58px;font-size:6.4px;font-weight:400;color:#555;letter-spacing:-0.15px">Opis</div>
<svg style="position:absolute;left:362.3px;top:430.5px;overflow:visible" width="12.0" height="12.0" viewBox="0 0 24 24"><path fill="#ddd" d="M19 3H5c-1.1 0-2 .9-2 2v14c0 1.1.9 2 2 2h14c1.1 0 2-.9 2-2V5c0-1.1-.9-2-2-2zM9 17H7v-7h2v7zm4 0h-2V7h2v10zm4 0h-2v-4h2v4z"/></svg>
<div class="t" style="left:356.00px;top:446.58px;font-size:6.4px;font-weight:400;color:#d4d4d4;letter-spacing:-0.09px">Statystyki</div>
<svg style="position:absolute;left:392px;top:430.2px;overflow:visible" width="12.6" height="12.6" viewBox="0 0 24 24"><path fill="#ddd" d="M3 13h2v-2H3v2zm0 4h2v-2H3v2zm0-8h2V7H3v2zm4 4h14v-2H7v2zm0 4h14v-2H7v2zM7 7v2h14V7H7z"/></svg>
<div class="t" style="left:389.50px;top:446.58px;font-size:6.4px;font-weight:400;color:#d4d4d4;letter-spacing:-0.16px">Więcej</div>
<div class="t" style="left:441.60px;top:440.50px;font-size:6.2px;font-weight:400;color:#606060;letter-spacing:-0.45px">CPS...</div>
<div class="t" style="left:484.80px;top:440.20px;font-size:6.2px;font-weight:400;color:#ddd;">-</div>
<div style="position:absolute;left:501.5px;top:436.45px;width:20px;height:17.3px;background:#fbfbfb;filter:blur(1px)"></div>
<div class="t" style="left:538.50px;top:440.20px;font-size:6.2px;font-weight:400;color:#ddd;">-</div>
<div class="t" style="left:558.30px;top:440.16px;font-size:6.6px;font-weight:400;color:#d4d4d4;letter-spacing:-0.1px">brak</div>
<div class="t" style="left:602.50px;top:433.90px;font-size:6.5px;font-weight:400;color:#555;letter-spacing:-0.16px">Zakupy</div>
<div class="t" style="left:602.50px;top:443.90px;font-size:6.5px;font-weight:400;color:#555;letter-spacing:-0.16px">Dom, Nieruchomości</div>
<div class="t" style="left:731.00px;top:435.50px;font-size:6.2px;font-weight:700;color:#444;">Display</div>
<div class="t" style="left:731.00px;top:444.33px;font-size:6.4px;font-weight:400;color:#d4d4d4;letter-spacing:-0.1px">brak</div>
<svg style="position:absolute;left:851.6px;top:426.10px" width="12" height="11" viewBox="0 0 12 11"><rect x="0.95" y="0.75" width="9.9" height="7.0" rx="0.7" stroke="#555" stroke-width="1.3" fill="none"/><path d="M4.9 7.6h2v1.3h1.6v1H3.3v-1h1.6z" fill="#555"/></svg>
<div class="t" style="left:844.80px;top:442.14px;font-size:6.45px;font-weight:400;color:#666;">Uruchom</div>
<div class="t" style="left:847.70px;top:449.14px;font-size:6.45px;font-weight:400;color:#666;letter-spacing:-0.25px">Display</div>
<div style="position:absolute;left:852.3px;top:458.1px;width:10.3px;height:1.5px;background:#4aa8da"></div>
</div></body></html>
